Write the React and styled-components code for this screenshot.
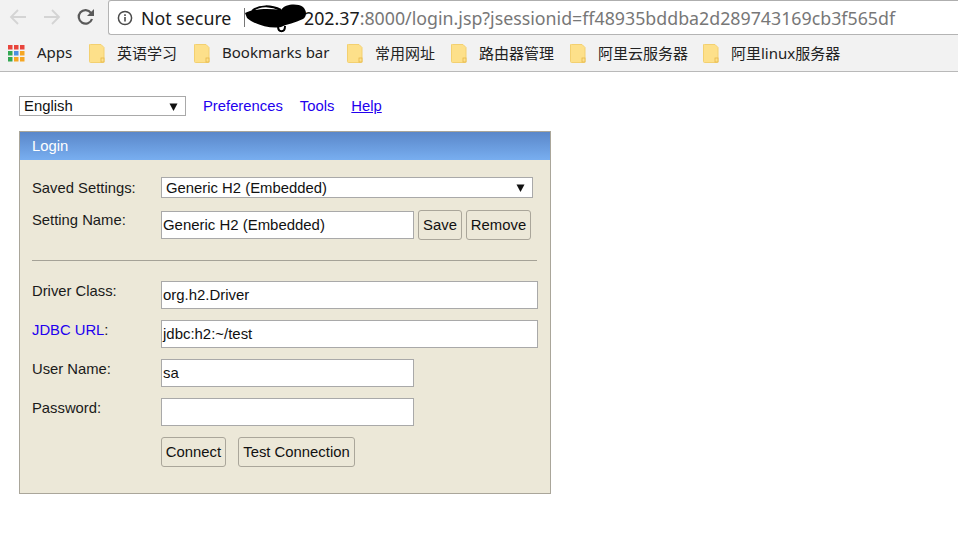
import React from "react";
import styled, { createGlobalStyle } from "styled-components";

const Global = createGlobalStyle`
  html, body { margin: 0; padding: 0; background: #fff; }
  body { font-family: "Liberation Sans", Arial, sans-serif; width: 958px; height: 538px; overflow: hidden; }
`;

const UI = `"Noto Sans", "Noto Sans CJK SC", sans-serif`;

const Toolbar = styled.div`
  height: 35px; box-sizing: border-box; background: #f2f2f2;
  display: flex; align-items: flex-start; padding-left: 6px;
`;
const NavBtn = styled.div`
  width: 24px; height: 34px; margin-right: ${p => p.$gap || 10}px;
  display: flex; align-items: center; justify-content: center; flex: none;
`;
const Omnibox = styled.div`
  position: relative; flex: 1; height: 35px; box-sizing: border-box; background: #fff;
  border: 1px solid #b4b4b4; border-top-color: #aeaeae; border-right: none; border-radius: 3px 0 0 3px;
  display: flex; align-items: center; padding-left: 8px;
  font-family: ${UI}; font-size: 17.8px; white-space: nowrap; overflow: hidden;
`;
const SecureText = styled.span`color: #1a1a1a; margin-left: 8px; width: 103px; flex: none;`;
const Divider = styled.span`width: 1px; height: 19px; background: #777; flex: none;`;
const Url = styled.span`color: #777; margin-left: 59px;`;
const UrlHost = styled.span`color: #1a1a1a;`;
const Scribble = styled.svg`position: absolute; left: 136px; top: 3px;`;

const BookmarksBar = styled.div`
  height: 37px; box-sizing: border-box; background: #f2f2f2; border-bottom: 1px solid #b9b9b9;
  display: flex; align-items: center; padding-left: 8px;
  font-family: ${UI}; font-size: 15px; color: #222; white-space: nowrap;
`;
const Bookmark = styled.div`
  display: flex; align-items: center; width: ${p => p.$w}px; flex: none;
`;
const BookmarkLabel = styled.span`margin-left: 12px; margin-top: -2px;`;
const FolderLabel = styled.span`margin-left: 12px; margin-top: -2px;`;

const Content = styled.div`padding: 24px 0 0 19px;`;
const TopRow = styled.div`display: flex; align-items: center; height: 20px; font-size: 14.8px;`;
const Select = styled.div`
  box-sizing: border-box; width: ${p => p.$w}px; height: ${p => p.$h}px; background: #fff;
  border: 1px solid #a9a9a9; display: flex; align-items: center; justify-content: space-between;
  padding: 0 7px 0 ${p => p.$pl}px; font-size: 14.85px; color: #111; flex: none;
`;
const Caret = styled.svg`flex: none; margin-top: 1px;`;
const NavLink = styled.a`
  color: #2200ee; margin-left: ${p => p.$ml}px; text-decoration: ${p => p.$u ? "underline" : "none"};
`;
const Panel = styled.div`
  margin-top: 15px; width: 532px; height: 363px; box-sizing: border-box;
  border: 1px solid #aaa69a; background: #ece8d8;
`;
const PanelHead = styled.div`
  height: 28px; box-sizing: border-box; padding: 6px 0 0 12px;
  background: linear-gradient(#5a87c9, #78aef0); color: #fff; font-size: 14.8px; line-height: 16px;
`;
const Form = styled.div`
  padding: 17px 0 0 12px; font-size: 14.8px; color: #111;
  display: grid; grid-template-columns: 129px 1fr;
`;
const Label = styled.div`
  line-height: 17px; padding-top: ${p => p.$pt ?? 2}px; height: ${p => p.$h}px; box-sizing: border-box;
  color: #1a1a1a;
`;
const Blue = styled.span`color: #2200ee;`;
const Field = styled.div`display: flex; align-items: flex-start;`;
const Input = styled.div`
  box-sizing: border-box; width: ${p => p.$w}px; height: 28px; background: #fff; border: 1px solid #a9a9a9;
  padding: 0 1px; line-height: 25px; font-size: 14.95px; color: #111; flex: none; margin-top: ${p => p.$mt || 0}px;
`;
const Btn = styled.button`
  box-sizing: border-box; width: ${p => p.$w}px; height: 30px; margin-left: ${p => p.$ml || 0}px; padding: 0;
  background: #ece8d8; border: 1px solid #aaa69a; border-radius: 3px; font: 14.85px "Liberation Sans", Arial, sans-serif;
  color: #111; flex: none;
`;
const Rule = styled.div`
  grid-column: 1 / 3; height: 1px; background: #a5a297; width: 505px; margin: 20px 0 20px;
`;

const Back = ({ c }) => (
  <svg width="20" height="20" viewBox="0 0 20 20" fill="none" stroke={c} strokeWidth="1.800">
    <path d="M18 10H3M10 3l-7 7 7 7" />
  </svg>
);
const Fwd = ({ c }) => (
  <svg width="20" height="20" viewBox="0 0 20 20" fill="none" stroke={c} strokeWidth="1.800">
    <path d="M2 10h15M10 3l7 7-7 7" />
  </svg>
);
const Reload = () => (
  <svg width="20" height="20" viewBox="0 0 20 20" fill="none">
    <path d="M16 12a6.800 6.800 0 1 1-1-6.200" stroke="#5a5a5a" strokeWidth="2.200" />
    <path d="M18 2v7h-7z" fill="#5a5a5a" />
  </svg>
);
const Info = () => (
  <svg width="16" height="16" viewBox="0 0 16 16" fill="none" style={{ flex: "none" }}>
    <circle cx="8" cy="8" r="6.600" stroke="#4a4a4a" strokeWidth="1.500" />
    <path d="M8 7v4.600M8 4.200v1.700" stroke="#4a4a4a" strokeWidth="1.600" />
  </svg>
);
const Folder = () => (
  <svg width="16" height="19" viewBox="0 0 16 19" style={{ flex: "none" }}>
    <path d="M1.500 0.500h10.500l3 3v14a1 1 0 0 1-1 1h-12.500a1 1 0 0 1-1-1v-16.500a.5 .5 0 0 1 1-.5z" fill="#fde08a" stroke="#f3d070" />
    <rect x="12" y="14" width="3" height="4" fill="#fde08a" stroke="#e6b84a" strokeWidth="0.800" />
  </svg>
);
const AppsGrid = () => {
  const colors = ["#e8453c", "#e8453c", "#e8453c", "#34a853", "#4a90e2", "#f5a623", "#34a853", "#f5a623", "#f5a623"];
  return (
    <svg width="17" height="17" viewBox="0 0 17 17" style={{ flex: "none" }}>
      {colors.map((c, i) => (
        <rect key={i} x={(i % 3) * 6} y={Math.floor(i / 3) * 6} width="4.500" height="4.500" fill={c} />
      ))}
    </svg>
  );
};
const Down = ({ w = 9 }) => (
  <Caret width={w} height="8" viewBox="0 0 9 8"><path d="M0.500 0.500h8L4.500 8z" fill="#111" /></Caret>
);

const bookmarks = [
  ["英语学习", 105], ["Bookmarks bar", 153], ["常用网址", 104], ["路由器管理", 119], ["阿里云服务器", 133], ["阿里linux服务器", 160],
];

export default function App() {
  return (
    <>
      <Global />
      <Toolbar>
        <NavBtn $gap={10}><Back c="#d4d4d4" /></NavBtn>
        <NavBtn $gap={10}><Fwd c="#d4d4d4" /></NavBtn>
        <NavBtn $gap={0}><Reload /></NavBtn>
        <Omnibox>
          <Info />
          <SecureText>Not secure</SecureText>
          <Divider />
          <Url><UrlHost>202.37</UrlHost>:8000/login.jsp?jsessionid=ff48935bddba2d289743169cb3f565df</Url>
          <Scribble width="66" height="30" viewBox="0 0 66 30">
            <path d="M0 9 C8 5 22 4 36 6 C40 0 52 -1 58 3 C62 7 62 12 58 15 C50 19 42 20 36 23 C26 25 10 21 2 14 Z" fill="#000" />
            <path d="M7 7 C14 1 26 1 36 6" stroke="#000" strokeWidth="2" fill="none" />
            <path d="M33 22 C33 29 40 29 40 22" stroke="#000" strokeWidth="2" fill="none" />
          </Scribble>
        </Omnibox>
      </Toolbar>
      <BookmarksBar>
        <Bookmark $w={81}><AppsGrid /><BookmarkLabel>Apps</BookmarkLabel></Bookmark>
        {bookmarks.map(([t, w]) => (
          <Bookmark key={t} $w={w}><Folder /><FolderLabel>{t}</FolderLabel></Bookmark>
        ))}
      </BookmarksBar>
      <Content>
        <TopRow>
          <Select $w={167} $h={20} $pl={4}>English<Down /></Select>
          <NavLink $ml={17}>Preferences</NavLink>
          <NavLink $ml={17}>Tools</NavLink>
          <NavLink $ml={17} $u>Help</NavLink>
        </TopRow>
        <Panel>
          <PanelHead>Login</PanelHead>
          <Form>
            <Label $h={33} $pt={3}>Saved Settings:</Label>
            <Field><Select $w={372} $h={21} $pl={4}>Generic H2 (Embedded)<Down /></Select></Field>
            <Label $h={30}>Setting Name:</Label>
            <Field>
              <Input $w={253} $mt={1}>Generic H2 (Embedded)</Input>
              <Btn $w={44} $ml={4}>Save</Btn>
              <Btn $w={65} $ml={4}>Remove</Btn>
            </Field>
            <Rule />
            <Label $h={39}>Driver Class:</Label>
            <Field><Input $w={377}>org.h2.Driver</Input></Field>
            <Label $h={39}><Blue>JDBC URL</Blue>:</Label>
            <Field><Input $w={377}>jdbc:h2:~/test</Input></Field>
            <Label $h={39}>User Name:</Label>
            <Field><Input $w={253}>sa</Input></Field>
            <Label $h={39}>Password:</Label>
            <Field><Input $w={253} /></Field>
            <Label $h={30} />
            <Field>
              <Btn $w={65}>Connect</Btn>
              <Btn $w={117} $ml={12}>Test Connection</Btn>
            </Field>
          </Form>
        </Panel>
      </Content>
    </>
  );
}
